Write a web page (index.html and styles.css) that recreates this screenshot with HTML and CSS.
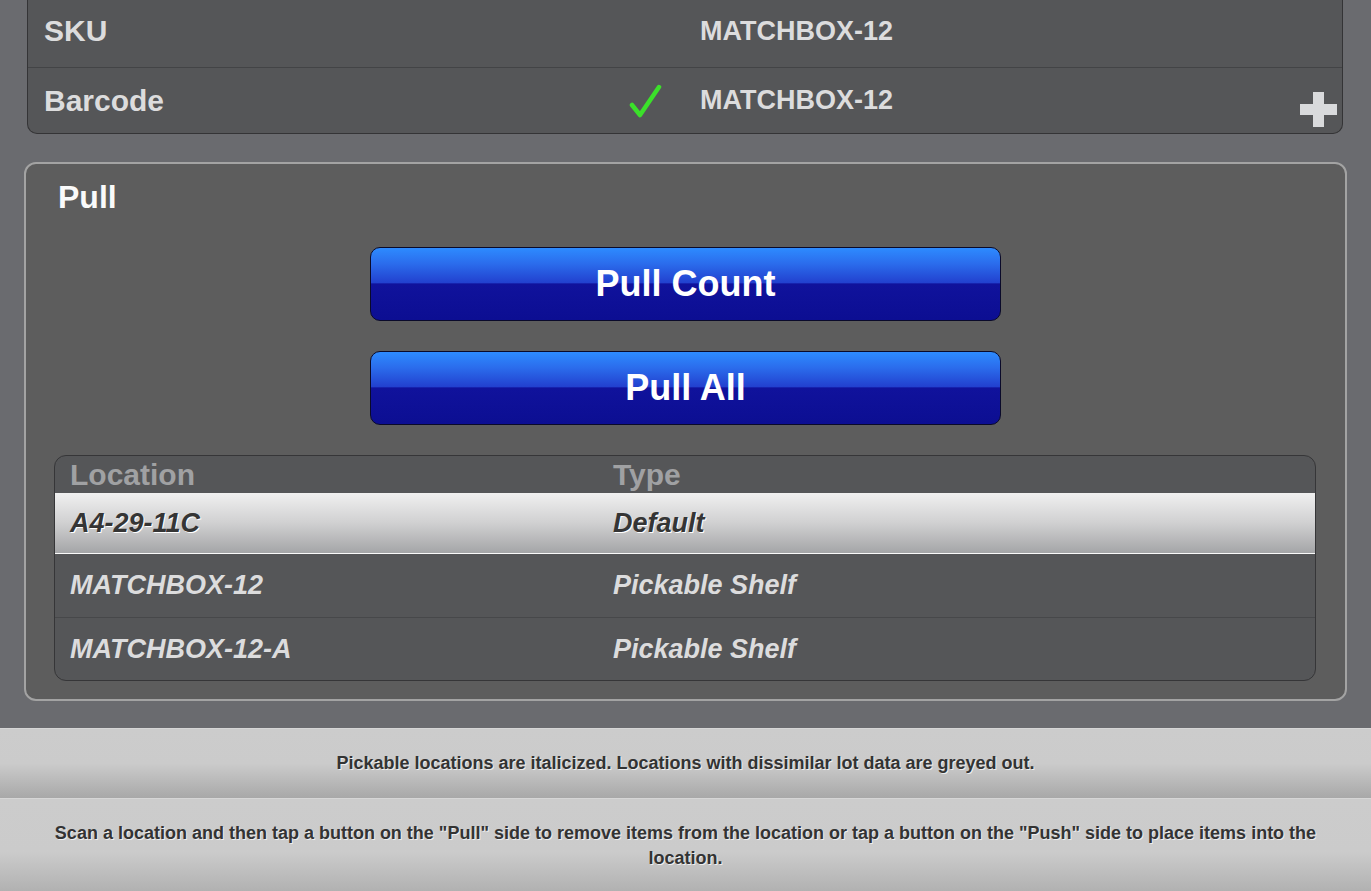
FILE: index.html
```html
<!DOCTYPE html>
<html lang="en">
<head>
<meta charset="UTF-8" />
<title>Pull</title>
<link rel="stylesheet" href="styles.css">
</head>
<body>

<div class="item-panel">
  <div class="item-row">
    <div class="item-label">SKU</div>
    <div class="item-check"></div>
    <div class="item-value">MATCHBOX-12</div>
  </div>
  <div class="item-row">
    <div class="item-label">Barcode</div>
    <div class="item-check">
      <svg width="34" height="36" viewBox="0 0 34 36"><path d="M3 21 L11 31 L30 3" fill="none" stroke="#3be02a" stroke-width="4.5" stroke-linecap="round" stroke-linejoin="round"/></svg>
    </div>
    <div class="item-value">MATCHBOX-12</div>
  </div>
  <button class="add-btn" aria-label="Add">
    <svg width="37" height="35" viewBox="0 0 37 35"><path d="M13 0h11v12h13v11H24v12H13V23H0V12h13z" fill="#d9dadc"/></svg>
  </button>
</div>

<div class="pull-panel">
  <h3>Pull</h3>
  <div class="pull-buttons">
    <button class="blue-btn">Pull Count</button>
    <button class="blue-btn">Pull All</button>
  </div>

  <div class="loc-table">
    <div class="loc-head">
      <span>Location</span>
      <span>Type</span>
    </div>
    <div class="loc-row selected">
      <span>A4-29-11C</span>
      <span>Default</span>
    </div>
    <div class="loc-row">
      <span>MATCHBOX-12</span>
      <span>Pickable Shelf</span>
    </div>
    <div class="loc-row">
      <span>MATCHBOX-12-A</span>
      <span>Pickable Shelf</span>
    </div>
  </div>
</div>

<div class="footer">
  <div class="footer-bar short">Pickable locations are italicized. Locations with dissimilar lot data are greyed out.</div>
  <div class="footer-bar">Scan a location and then tap a button on the "Pull" side to remove items from the location or tap a button on the "Push" side to place items into the location.</div>
</div>

</body>
</html>
```

FILE: styles.css
```css
body {
  margin: 0;
  background: #6a6b6f;
  font-family: "Liberation Sans", Arial, sans-serif;
  font-weight: bold;
  color: #dcdcdd;
  overflow: hidden;
}

/* item info */
.item-panel {
  position: relative;
  margin: -2px 28px 0 27px;
  background: #555658;
  border: 1px solid #343436;
  border-top: none;
  border-radius: 0 0 10px 10px;
}
.item-row {
  display: grid;
  grid-template-columns: 566px 72px 1fr;
  align-items: center;
  height: 66px;
  padding-left: 16px;
  padding-bottom: 3px;
}
.item-row + .item-row {
  border-top: 1px solid #434446;
  height: 65px;
  padding-bottom: 0;
}
.item-label {
  font-size: 30px;
}
.item-value {
  font-size: 27px;
  padding-left: 18px;
}
.item-check {
  display: flex;
  justify-content: center;
  padding-top: 2px;
}
.add-btn {
  position: absolute;
  right: 5px;
  bottom: 6px;
  padding: 0;
  border: none;
  background: none;
  line-height: 0;
}

/* pull section */
.pull-panel {
  margin: 28px 24px 0 24px;
  background: #5d5d5d;
  border: 2px solid #a3a3a3;
  border-radius: 12px;
  padding: 14px 29px 18px 28px;
}
.pull-panel h3 {
  margin: 0 0 0 4px;
  font-size: 32px;
  color: #fafafa;
  line-height: 38px;
}
.pull-buttons {
  display: flex;
  flex-direction: column;
  align-items: center;
  gap: 30px;
  margin-top: 31px;
}
.blue-btn {
  width: 631px;
  height: 74px;
  margin-left: 1px;
  border: 1px solid #0a0a2a;
  border-radius: 10px;
  color: #fff;
  font-family: "Liberation Sans", Arial, sans-serif;
  font-weight: bold;
  font-size: 36px;
  background: linear-gradient(#2d8bff 0%, #2b6cec 22%, #2241cf 48%, #10129c 50%, #0c0e92 100%);
  cursor: pointer;
}

.loc-table {
  margin-top: 30px;
  border: 1px solid #363638;
  border-radius: 12px;
  background: #555658;
  overflow: hidden;
}
.loc-head,
.loc-row {
  display: grid;
  grid-template-columns: 543px 1fr;
  align-items: center;
  padding-left: 15px;
}
.loc-head {
  height: 37px;
  font-size: 30px;
  color: #a0a1a3;
}
.loc-row {
  height: 63px;
  font-size: 27px;
  font-style: italic;
  color: #dcdcdd;
}
.loc-row + .loc-row {
  border-top: 1px solid #47484a;
}
.loc-row:last-child {
  height: 62px;
}
.loc-row.selected {
  height: 60px;
  color: #353535;
  text-shadow: 1px 1px 0 #fff;
  background: linear-gradient(#f0f0f0, #d0d0d1 50%, #a4a5a7);
  border-bottom: 1px solid #fafafa;
}
.loc-row.selected + .loc-row {
  border-top: none;
}

/* help text */
.footer {
  margin-top: 27px;
}
.footer-bar {
  font-size: 18px;
  color: #333;
  text-shadow: 1px 1px 0 #eee;
  text-align: center;
  line-height: 25px;
  padding: 22px 52px 34px;
  background: linear-gradient(#cccccc 0%, #cbcbcb 50%, #a8a8a8 100%);
  border-top: 1px solid #d6d6d6;
}
.footer-bar.short {
  padding: 22px 52px 22px;
}
```
